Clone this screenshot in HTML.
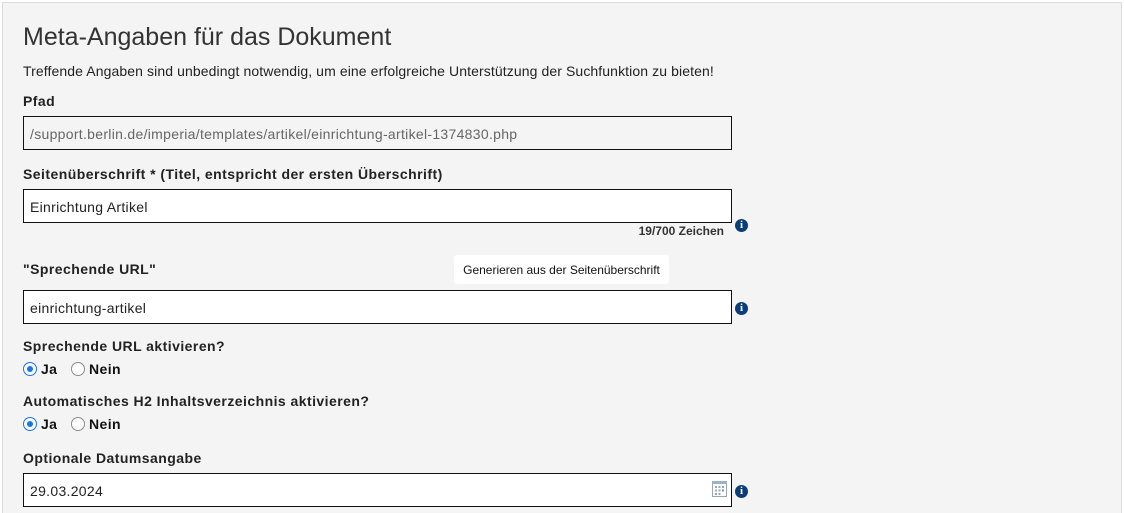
<!DOCTYPE html>
<html><head><meta charset="utf-8"><style>
*{box-sizing:border-box;margin:0;padding:0}
html,body{width:1124px;height:513px;overflow:hidden}
body{background:#fff;font-family:"Liberation Sans",Arial,sans-serif;position:relative}
.panel{position:absolute;left:2px;top:2px;width:1120px;height:511px;background:#f4f4f4;border:1px solid #dcdcdc;border-bottom:none}
.a{position:absolute;white-space:nowrap}
h1{position:absolute;left:23px;top:23px;font-size:25px;font-weight:normal;color:#333}
.lbl{font-size:14px;font-weight:bold;color:#222;letter-spacing:0.45px}
.inp{position:absolute;left:23px;width:709px;height:34px;border:1.5px solid #111;background:#fff;font-size:14px;color:#222;padding:9px 0 0 6px;letter-spacing:0.3px}
.info{position:absolute;width:13px;height:13px;border-radius:50%;background:#0b3d7a;color:#fff;font-size:11px;font-weight:bold;font-family:"Liberation Serif",serif;text-align:center;line-height:13px}
.r{position:absolute;width:14px;height:14px;border-radius:50%;border:1.5px solid #8a8a8a;background:#fff}
.r.on{border:1.5px solid #1a73e8}
.r.on::after{content:"";position:absolute;left:2.5px;top:2.5px;width:6px;height:6px;border-radius:50%;background:#1a73e8}
.rt{font-size:14px;font-weight:bold;color:#111;letter-spacing:0.4px}
</style></head><body>
<div class="panel"></div>
<h1>Meta-Angaben für das Dokument</h1>
<div class="a" style="left:23px;top:63px;font-size:14px;color:#222;letter-spacing:0.1px">Treffende Angaben sind unbedingt notwendig, um eine erfolgreiche Unterstützung der Suchfunktion zu bieten!</div>
<div class="a lbl" style="left:23px;top:93px">Pfad</div>
<div class="inp" style="top:116px;background:#f4f4f4;color:#666">/support.berlin.de/imperia/templates/artikel/einrichtung-artikel-1374830.php</div>
<div class="a lbl" style="left:23px;top:166px">Seitenüberschrift * (Titel, entspricht der ersten Überschrift)</div>
<div class="inp" style="top:189px">Einrichtung Artikel</div>
<div class="a" style="right:400px;top:224px;font-size:12px;font-weight:bold;color:#333">19/700 Zeichen</div>
<div class="info" style="left:735px;top:219px">i</div>
<div class="a lbl" style="left:23px;top:261px">"Sprechende URL"</div>
<div class="a" style="left:454px;top:255px;width:215px;height:29px;background:#fff;border-radius:3px;font-size:12px;color:#111;padding-top:8px;text-align:center">Generieren aus der Seitenüberschrift</div>
<div class="inp" style="top:290px">einrichtung-artikel</div>
<div class="info" style="left:735px;top:302px">i</div>
<div class="a lbl" style="left:23px;top:338px">Sprechende URL aktivieren?</div>
<div class="r on" style="left:23px;top:362px"></div><div class="a rt" style="left:41px;top:361px">Ja</div>
<div class="r" style="left:71px;top:362px"></div><div class="a rt" style="left:89px;top:361px">Nein</div>
<div class="a lbl" style="left:23px;top:393px">Automatisches H2 Inhaltsverzeichnis aktivieren?</div>
<div class="r on" style="left:23px;top:417px"></div><div class="a rt" style="left:41px;top:416px">Ja</div>
<div class="r" style="left:71px;top:417px"></div><div class="a rt" style="left:89px;top:416px">Nein</div>
<div class="a lbl" style="left:23px;top:450px">Optionale Datumsangabe</div>
<div class="inp" style="top:473px">29.03.2024</div>
<svg class="a" style="left:712px;top:481px" width="15" height="16" viewBox="0 0 15 16">
<rect x="0.5" y="0.5" width="14" height="15" fill="#fff" stroke="#9aa7b3"/>
<rect x="0" y="0" width="15" height="3" fill="#9ab3c8"/>
<g fill="#9aa7b3"><rect x="3" y="5" width="2" height="2"/><rect x="6.5" y="5" width="2" height="2"/><rect x="10" y="5" width="2" height="2"/><rect x="3" y="8.5" width="2" height="2"/><rect x="6.5" y="8.5" width="2" height="2"/><rect x="10" y="8.5" width="2" height="2" fill="#5aa0d8"/><rect x="3" y="12" width="2" height="2"/><rect x="6.5" y="12" width="2" height="2"/></g>
</svg>
<div class="info" style="left:735px;top:485px">i</div>
</body></html>
